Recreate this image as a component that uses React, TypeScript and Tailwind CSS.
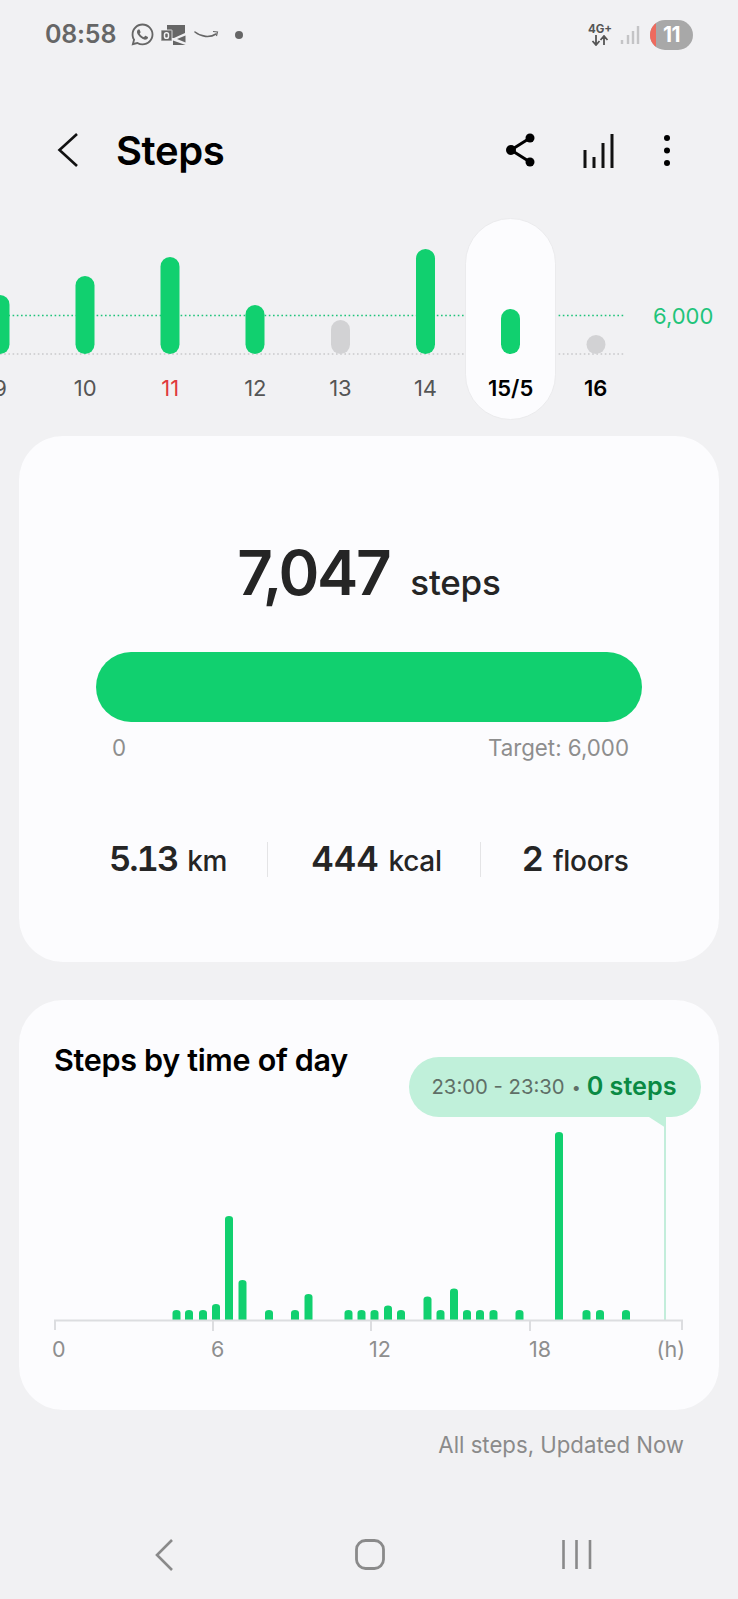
import React from 'react';
import { FaWhatsapp } from 'react-icons/fa';

// strip bars: day center x, top y (page coords minus strip top)
const dayBars = [
  { x: 0, top: 76, color: '#11d06f' },
  { x: 85, top: 57, color: '#11d06f' },
  { x: 170, top: 38, color: '#11d06f' },
  { x: 255, top: 86, color: '#11d06f' },
  { x: 340.5, top: 101, color: '#d2d2d4' },
  { x: 425.5, top: 30, color: '#11d06f' },
  { x: 510.5, top: 90, color: '#11d06f' },
  { x: 596, top: 116, color: '#d2d2d4' },
];

const days = [
  { label: '9', cls: 'text-[#555555]' },
  { label: '10', cls: 'text-[#555555]' },
  { label: '11', cls: 'text-[#e0393e]' },
  { label: '12', cls: 'text-[#555555]' },
  { label: '13', cls: 'text-[#555555]' },
  { label: '14', cls: 'text-[#555555]' },
  { label: '15/5', cls: 'text-black font-semibold' },
  { label: '16', cls: 'text-black font-semibold' },
];

// bars of the day chart: center x inside the card, top y inside the chart svg
const hourBars = [
  [157.5, 270], [170, 270], [184, 270], [197, 264], [210, 176], [223.5, 240],
  [250, 270], [276, 270], [289.5, 254], [329.5, 270], [342.5, 270], [355.5, 270],
  [369, 265.5], [382, 270], [408.5, 256.5], [421.5, 270], [435, 248.5], [448, 270],
  [461, 270], [474.5, 270], [500.5, 270], [540, 92], [567.5, 270], [581, 270], [607, 270],
];

function Stat({ value, unit, className, valueClass }: { value: string; unit: string; className: string; valueClass: string }) {
  return (
    <div className={`flex items-baseline ${className}`}>
      <span className={`text-[34.5px] font-semibold ${valueClass}`}>{value}</span>
      <span className="ml-[10px] text-[28px] font-medium tracking-[-0.3px]">{unit}</span>
    </div>
  );
}

export default function App() {
  return (
    <div
      className="flex h-[1599px] w-[738px] flex-col overflow-hidden bg-[#f1f1f3]"
      style={{ fontFamily: 'Inter, "Noto Sans", sans-serif' }}
    >
      {/* Status bar */}
      <div className="flex h-[69px] shrink-0 items-center pl-[45px] pr-[45px] text-[#666666]">
        <span className="w-[73px] text-[25px] font-semibold tracking-[-0.2px]">08:58</span>
        <FaWhatsapp className="ml-[12px] h-[25px] w-[25px]" />
        <svg className="ml-[6px]" width="26" height="20" viewBox="0 0 26 20">
          <path d="M6 0h18v8l-11 5H6z" fill="#666" />
          <path d="M24.500 10.500v7L16 14z" fill="#666" />
          <path d="M12 15.500l12.500 4.500H12z" fill="#666" />
          <rect x="0" y="5" width="11" height="11" rx="0.5" fill="#666" stroke="#f1f1f3" strokeWidth="0.8" />
          <rect x="3.500" y="7.800" width="4" height="5.400" rx="1.800" fill="none" stroke="#f1f1f3" strokeWidth="1.5" />
        </svg>
        <svg className="ml-[7px]" width="26" height="10" viewBox="0 0 26 10">
          <path d="M1 2c6 5 15 6 21 2" fill="none" stroke="#666" strokeWidth="1.6" strokeLinecap="round" />
          <path d="M19 1.500l4.500.5-1 4" fill="none" stroke="#666" strokeWidth="1.1" />
        </svg>
        <div className="ml-[15px] h-[8px] w-[8px] rounded-full bg-[#666666]" />
        <div className="ml-auto flex w-[24px] flex-col items-center leading-none">
          <span className="text-[11.5px] font-bold leading-[12px] text-[#555555]">4G+</span>
          <svg width="18" height="11" viewBox="0 0 18 11">
            <path d="M5 0v9M1.500 6l3.500 4 3.500-4M13 10V1M9.500 5L13 1l3.500 4" fill="none" stroke="#555" strokeWidth="1.8" />
          </svg>
        </div>
        <svg className="ml-[8px]" width="20" height="20" viewBox="0 0 20 20">
          <path d="M2 19v-4M8 19v-9M13 19V6M18 19V1" stroke="#c4c4c6" strokeWidth="2.4" />
        </svg>
        <div className="ml-[10px] flex h-[30px] w-[43px] items-center overflow-hidden rounded-full bg-[#a8a8a8] text-[21px] font-bold text-white">
          <div className="h-full w-[6px] bg-[#ee6b5e]" />
          <span className="ml-[7px] tracking-[-0.5px]">11</span>
        </div>
      </div>

      {/* Header */}
      <div className="mt-[42px] flex h-[80px] shrink-0 items-center pl-[56px] pr-[65px]">
        <svg width="24" height="38" viewBox="0 0 24 38">
          <path d="M21 2L3.500 18 21 34" fill="none" stroke="#111" strokeWidth="2.6" />
        </svg>
        <h1 className="ml-[36px] text-[40px] font-semibold tracking-[-0.4px] text-black">Steps</h1>
        <svg className="ml-auto" width="36" height="36" viewBox="0 0 36 36">
          <path d="M26 5L7 17l19 12" fill="none" stroke="#000" strokeWidth="3" />
          <circle cx="26" cy="5" r="4.5" />
          <circle cx="7" cy="17" r="5" />
          <circle cx="26" cy="29" r="4.5" />
        </svg>
        <svg className="ml-[43px]" width="36" height="36" viewBox="0 0 36 36">
          <path d="M2 35V17M11 35V24M20 35V10M29 35V1" stroke="#111" strokeWidth="3" />
        </svg>
        <svg className="ml-[42px]" width="12" height="36" viewBox="0 0 12 36">
          <circle cx="6" cy="5" r="3" />
          <circle cx="6" cy="17.500" r="3" />
          <circle cx="6" cy="30" r="3" />
        </svg>
      </div>

      {/* Day strip */}
      <div className="relative mt-[28px] h-[200px] shrink-0">
        <svg className="absolute left-0 top-0" width="738" height="200">
          <line x1="0" y1="96.5" x2="624" y2="96.5" stroke="#1fc47a" strokeWidth="1.6" strokeDasharray="1.6 2.6" />
          <line x1="0" y1="135" x2="624" y2="135" stroke="#c9c9cb" strokeWidth="1.6" strokeDasharray="1.6 2.6" />
        </svg>
        <div className="absolute left-[465px] top-[-1px] h-[202px] w-[91px] rounded-full border border-[#ebebed] bg-[#fcfcfe]" />
        <svg className="absolute left-0 top-0" width="738" height="200">
          {dayBars.map((b) => (
            <rect key={b.x} x={b.x - 9.5} y={b.top} width="19" height={135 - b.top} rx="9.5" fill={b.color} />
          ))}
        </svg>
        <span className="absolute left-[653px] top-[83px] text-[22px] leading-[28px] text-[#1fc47a]">6,000</span>
        <div className="relative ml-[-42.5px] flex pt-[155px]">
          {days.map((d) => (
            <span key={d.label} className={`w-[85.1px] text-center text-[22px] leading-[28px] ${d.cls}`}>
              {d.label}
            </span>
          ))}
        </div>
      </div>

      {/* Summary card */}
      <div className="mx-[19px] mt-[17px] flex h-[526px] shrink-0 flex-col rounded-[44px] bg-[#fcfcfe] text-[#252525]">
        <div className="mt-[99px] flex items-baseline justify-center">
          <span className="text-[62px] font-semibold leading-[76px] tracking-[-2.4px]">7,047</span>
          <span className="ml-[21px] text-[35px] font-medium tracking-[-0.2px]">steps</span>
        </div>
        <div className="mx-[77px] mt-[41px] h-[70px] rounded-full bg-[#11d06f]" />
        <div className="ml-[93px] mr-[90px] mt-[12px] flex justify-between text-[22.3px] leading-[28px] text-[#8e8e8e]">
          <span>0</span>
          <span>Target: 6,000</span>
        </div>
        <div className="mt-[79px] flex h-[36px] items-center">
          <Stat value="5.13" unit="km" className="ml-[90px] w-[158px]" valueClass="tabular-nums tracking-[-2px]" />
          <div className="h-[35px] w-px bg-[#e4e4e6]" />
          <Stat value="444" unit="kcal" className="ml-[43px] w-[169px]" valueClass="tracking-[-0.5px]" />
          <div className="h-[35px] w-px bg-[#e4e4e6]" />
          <Stat value="2" unit="floors" className="ml-[41px]" valueClass="tracking-[-0.5px]" />
        </div>
      </div>

      {/* Time of day card */}
      <div className="relative mx-[19px] mt-[38px] h-[410px] shrink-0 rounded-[44px] bg-[#fcfcfe]">
        <h2 className="pl-[35px] pt-[42px] text-[30.5px] font-semibold leading-[36px] tracking-[-0.3px] text-black">
          Steps by time of day
        </h2>
        <div className="absolute left-[389.5px] top-[57px] flex h-[60px] w-[292px] items-center rounded-full bg-[#c0f0da] pl-[23px]">
          <span className="text-[20.3px] text-[#5f6f67]">23:00 - 23:30</span>
          <span className="ml-[7px] text-[16px] text-[#5f6f67]">•</span>
          <span className="ml-[6px] text-[25.2px] font-semibold text-[#0a8a44]">0 steps</span>
        </div>
        <svg className="absolute left-0 top-[40px]" width="700" height="300">
          <path d="M630 77h17v11z" fill="#c0f0da" />
          <line x1="646" y1="85" x2="646" y2="280" stroke="#c3eddb" strokeWidth="2" />
          {hourBars.map(([x, top]) => (
            <path key={x} d={`M${x - 4} 280V${top + 3}a4 3 0 0 1 8 0V280z`} fill="#11d06f" />
          ))}
          <path d="M36 290v-9.500H663v9.500M194 281v10M352 281v10M511 281v10" fill="none" stroke="#dcdde0" strokeWidth="2" />
        </svg>
        <div className="absolute left-[33px] right-[34px] top-[335px] flex text-[21.5px] leading-[28px] text-[#8e8e8e]">
          <span className="w-[159px]">0</span>
          <span className="w-[158px]">6</span>
          <span className="w-[160px]">12</span>
          <span>18</span>
          <span className="ml-auto">(h)</span>
        </div>
      </div>

      <p className="mr-[54px] mt-[21px] text-right text-[22.2px] leading-[28px] text-[#8a8a8a]">All steps, Updated Now</p>

      {/* Nav bar */}
      <div className="mt-[80px] flex h-[32px] items-start pl-[155px]">
        <svg width="18" height="32" viewBox="0 0 18 32">
          <path d="M17 1L2 16l15 15" fill="none" stroke="#8a8a8a" strokeWidth="2.6" />
        </svg>
        <svg className="ml-[182px]" width="30" height="31" viewBox="0 0 30 31">
          <rect x="1.500" y="1.500" width="27" height="28" rx="9" fill="none" stroke="#8a8a8a" strokeWidth="2.800" />
        </svg>
        <svg className="ml-[177px]" width="30" height="31" viewBox="0 0 30 31">
          <path d="M1.500 1v29M14.500 1v29M28 1v29" fill="none" stroke="#8a8a8a" strokeWidth="2.600" />
        </svg>
      </div>
    </div>
  );
}
